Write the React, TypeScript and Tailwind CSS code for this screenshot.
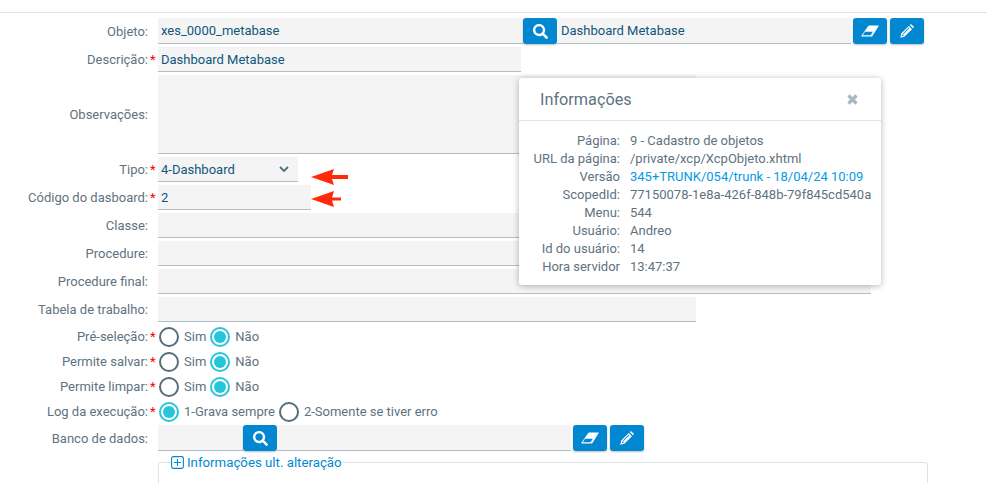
import type { ReactNode } from "react";
import { FaSearch } from "react-icons/fa";

function EraserIcon() {
  return (
    <svg viewBox="0 0 18 12" className="h-[12px] w-[18px]">
      <path
        d="M8.2 0.4 H17.4 Q18 0.4 17.7 1 L11.4 11 Q11 11.6 10.4 11.6 H1 Q0 11.6 0.4 10.8 L7.2 1 Q7.6 0.4 8.2 0.4 Z M4 6.8 L1.8 10.3 H9.6 L11.8 6.8 Z"
        fill="#fff"
        fillRule="evenodd"
      />
    </svg>
  );
}

function PencilIcon() {
  return (
    <svg viewBox="0 0 14 14" className="h-[14px] w-[14px]" fill="#fff">
      <path d="M0.3 13.7 L1.2 9.6 L8.8 2 L12 5.2 L4.4 12.8 Z M2.4 10.2 L1.8 12.2 L3.8 11.6 L3.4 10.6 Z M3 9.4 L3.6 10 L9.4 4.2 L8.8 3.6 Z" fillRule="evenodd" />
      <path d="M9.7 1.1 L10.4 0.4 Q10.9 0 11.4 0.4 L13.6 2.6 Q14 3.1 13.6 3.6 L12.9 4.3 Z" />
    </svg>
  );
}

function IconButton({ children }: { children: ReactNode }) {
  return (
    <button className="flex h-[26px] w-[34px] shrink-0 items-center justify-center rounded-[3px] bg-[#0288d1] text-white shadow-[0_1px_2px_rgba(0,0,0,0.25)]">
      {children}
    </button>
  );
}

function Field({ value, className }: { value?: string; className?: string }) {
  return (
    <div
      className={[
        "flex h-[25px] items-center border-b border-[#b0bec5] bg-[#f4f4f4] px-[3px] text-[#10577c]",
        className,
      ]
        .filter(Boolean)
        .join(" ")}
    >
      {value}
    </div>
  );
}

function Row({
  label,
  required,
  children,
  className,
}: {
  label: string;
  required?: boolean;
  children: ReactNode;
  className?: string;
}) {
  return (
    <div className={["flex items-center", className].filter(Boolean).join(" ")}>
      <span className="w-[148px] shrink-0 text-right whitespace-nowrap text-[#5f7280]">{label}</span>
      <span className="w-[10px] shrink-0 pl-[2px] text-[#f00]">{required ? "*" : ""}</span>
      {children}
    </div>
  );
}

function Radio({ checked, label }: { checked?: boolean; label: string }) {
  return (
    <span className="flex items-center">
      <span
        className={
          "flex h-5 w-5 items-center justify-center rounded-full border-2 " +
          (checked ? "border-[#26c6da]" : "border-[#546e7a]")
        }
      >
        {checked ? <span className="h-3 w-3 rounded-full bg-[#26c6da]" /> : null}
      </span>
      <span className="ml-[5px] mr-[5px] text-[#5f7280]">{label}</span>
    </span>
  );
}

const INFO_ROWS: { label: string; value: string; link?: boolean }[] = [
  { label: "Página:", value: "9 - Cadastro de objetos" },
  { label: "URL da página:", value: "/private/xcp/XcpObjeto.xhtml" },
  { label: "Versão", value: "345+TRUNK/054/trunk - 18/04/24 10:09", link: true },
  { label: "ScopedId:", value: "77150078-1e8a-426f-848b-79f845cd540a" },
  { label: "Menu:", value: "544" },
  { label: "Usuário:", value: "Andreo" },
  { label: "Id do usuário:", value: "14" },
  { label: "Hora servidor", value: "13:47:37" },
];

function InfoPopup() {
  return (
    <div className="absolute left-[519px] top-[78px] h-[207px] w-[362px] rounded-[3px] bg-white shadow-[0_1px_6px_rgba(0,0,0,0.3)]">
      <div className="flex h-[43px] items-center justify-between border-b border-[#dfe3e5] pl-[21px] pr-[23px]">
        <span className="text-[16.25px] text-[#607380]">Informações</span>
        <svg viewBox="0 0 11 11" className="h-[11px] w-[11px]" fill="none" stroke="#a9b7bf" strokeWidth="3.2">
          <path d="M1.5 1.5 L9.5 9.5 M9.5 1.5 L1.5 9.5" />
        </svg>
      </div>
      <div className="pt-[10px]">
        {INFO_ROWS.map((row) => (
          <div key={row.label} className="flex h-[18px] items-center">
            <span className="w-[101px] shrink-0 text-right text-[#5f7280]">{row.label}</span>
            <span className={"ml-[10px] whitespace-nowrap " + (row.link ? "text-[#039be5]" : "text-[#5f7280]")}>
              {row.value}
            </span>
          </div>
        ))}
      </div>
    </div>
  );
}

function YesNo() {
  return (
    <span className="ml-px flex">
      <Radio label="Sim" />
      <span className="-ml-px">
        <Radio checked label="Não" />
      </span>
    </span>
  );
}

export default function App() {
  return (
    <div className="relative h-[483px] w-[987px] overflow-hidden bg-white font-['Roboto',sans-serif] text-[13px] leading-[15px]">
      <div className="h-[13px] border-b border-[#e1e4e6]" />
      <div className="flex flex-col gap-[3px] pt-[5px]">
        <Row label="Objeto:">
          <Field value="xes_0000_metabase" className="h-[26px] w-[365px]" />
          <IconButton>
            <FaSearch className="h-[15px] w-[15px]" />
          </IconButton>
          <Field value="Dashboard Metabase" className="h-[26px] w-[294px] pl-[4px]" />
          <span className="ml-[2px] flex gap-[3px]">
            <IconButton>
              <EraserIcon />
            </IconButton>
            <IconButton>
              <PencilIcon />
            </IconButton>
          </span>
        </Row>
        <Row label="Descrição:" required>
          <Field value="Dashboard Metabase" className="w-[363px]" />
        </Row>
        <Row label="Observações:">
          <Field className="h-[79px] w-[538px]" />
        </Row>
        <Row label="Tipo:" required>
          <div className="flex h-[25px] w-[140px] items-center justify-between border-b border-[#b0bec5] bg-[#f4f4f4] pl-[3px] pr-[9px] text-[#10577c]">
            <span>4-Dashboard</span>
            <svg viewBox="0 0 10 7" className="h-[7px] w-[10px]" fill="none" stroke="#546e7a" strokeWidth="1.8">
              <path d="M1 1 L5 5 L9 1" />
            </svg>
          </div>
          <svg viewBox="0 0 37 16" className="ml-[13px] h-4 w-[37px] shrink-0 translate-y-[7px]">
            <path d="M0 8 L23 0 L21 6 H37 V10 H21 L23 16 Z" fill="#ff2a0a" />
          </svg>
        </Row>
        <Row label="Código do dasboard:" required>
          <Field value="2" className="w-[153px]" />
          <svg viewBox="0 0 30 16" className="h-4 w-[30px] shrink-0 translate-y-[1px]">
            <path d="M0 8 L23 0 L21 6.5 H30 V9.5 H21 L23 16 Z" fill="#ff2a0a" />
          </svg>
        </Row>
        <Row label="Classe:">
          <Field className="w-[713px]" />
        </Row>
        <Row label="Procedure:">
          <Field className="w-[713px]" />
        </Row>
        <Row label="Procedure final:">
          <Field className="w-[713px]" />
        </Row>
        <Row label="Tabela de trabalho:">
          <Field className="w-[538px]" />
        </Row>
      </div>
      <div className="mt-[2px] flex flex-col">
        <Row label="Pré-seleção:" required className="h-[25px]">
          <YesNo />
        </Row>
        <Row label="Permite salvar:" required className="h-[25px]">
          <YesNo />
        </Row>
        <Row label="Permite limpar:" required className="h-[25px]">
          <YesNo />
        </Row>
        <Row label="Log da execução:" required className="h-[25px]">
          <span className="ml-px flex">
            <Radio checked label="1-Grava sempre" />
            <span className="-ml-px">
              <Radio label="2-Somente se tiver erro" />
            </span>
          </span>
        </Row>
      </div>
      <div className="mt-px">
        <Row label="Banco de dados:">
          <Field className="h-[26px] w-[85px]" />
          <IconButton>
            <FaSearch className="h-[15px] w-[15px]" />
          </IconButton>
          <Field className="h-[26px] w-[294px]" />
          <span className="ml-[2px] flex gap-[3px]">
            <IconButton>
              <EraserIcon />
            </IconButton>
            <IconButton>
              <PencilIcon />
            </IconButton>
          </span>
        </Row>
      </div>
      <fieldset className="ml-[158px] mt-[4px] h-[60px] w-[770px] rounded-[3px] border border-[#dfe3e5] pl-[12px]">
        <legend className="flex items-center text-[13.25px] text-[#0288d1]">
          <svg viewBox="0 0 13 13" className="mr-[3px] h-[13px] w-[13px]" fill="none" stroke="#0288d1" strokeWidth="1.1">
            <rect x="0.6" y="0.6" width="11.8" height="11.8" rx="1.6" />
            <path d="M6.5 3 V10 M3 6.5 H10" />
          </svg>
          Informações ult. alteração
        </legend>
      </fieldset>
      <InfoPopup />
    </div>
  );
}
